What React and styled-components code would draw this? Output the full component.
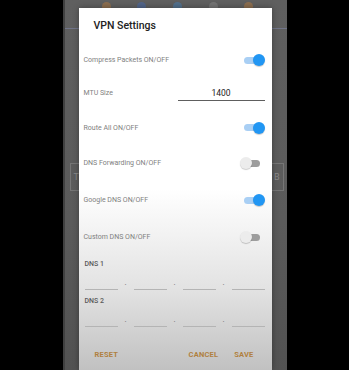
import React from 'react';
import styled, { createGlobalStyle } from 'styled-components';

const Global = createGlobalStyle`
  html, body {
    margin: 0;
    padding: 0;
    background: #000;
  }
  body {
    font-family: Roboto, 'Noto Sans', sans-serif;
  }
`;

const Stage = styled.div`
  width: 349px;
  height: 370px;
  background: #000;
  display: flex;
  justify-content: center;
  overflow: hidden;
`;

const Screen = styled.div`
  position: relative;
  width: 222px;
  height: 370px;
  border-left: 2px solid #404040;
  background: linear-gradient(to bottom, #5f5f5f 0%, #5b5b5b 60%, #525252 100%);
  display: flex;
  flex-direction: column;
`;

const AppIcons = styled.div`
  display: flex;
  justify-content: space-around;
  padding: 2px 20px 0 24px;
  height: 8px;
`;

const AppIcon = styled.span`
  width: 9px;
  height: 9px;
  border-radius: 50%;
  background: ${(p) => p.$color};
  opacity: 0.35;
`;

const AppDivider = styled.div`
  margin-top: 18px;
  height: 1px;
  background: #707488;
`;

const AppBox = styled.div`
  margin: 134px 3px 0 5px;
  height: 26px;
  border: 1px solid #767676;
  display: flex;
  align-items: center;
  justify-content: space-between;
  padding: 0 3px;
  font-size: 9px;
  color: #8a8a8a;
`;

const Dialog = styled.div`
  position: absolute;
  left: 14px;
  top: 8px;
  bottom: 0;
  width: 193px;
  background: linear-gradient(to bottom, #ffffff 0%, #ffffff 50%, #e2e2e2 78%, #c1c1c1 100%);
  box-shadow: 0 0 6px rgba(0, 0, 0, 0.35);
  display: flex;
  flex-direction: column;
`;

const Title = styled.div`
  height: 24px;
  padding: 12px 0 0 15px;
  font-size: 10.5px;
  line-height: 12px;
  font-weight: 500;
  color: #222;
`;

const Body = styled.div`
  padding: 0 7px 0 5px;
  display: flex;
  flex-direction: column;
`;

const Row = styled.div`
  height: ${(p) => p.$h}px;
  display: flex;
  align-items: center;
  justify-content: space-between;
`;

const Label = styled.span`
  font-size: 7px;
  color: #808080;
`;

const SwitchBox = styled.div`
  position: relative;
  width: 25px;
  height: 12px;
`;

const Track = styled.span`
  position: absolute;
  left: 4px;
  top: 2.5px;
  width: 16px;
  height: 7px;
  border-radius: 4px;
  background: ${(p) => (p.$on ? '#a9cff4' : '#9d9d9d')};
`;

const Thumb = styled.span`
  position: absolute;
  top: 0;
  ${(p) => (p.$on ? 'right: 0;' : 'left: 0;')}
  width: 12px;
  height: 12px;
  border-radius: 50%;
  background: ${(p) => (p.$on ? '#2196f3' : '#ececec')};
  box-shadow: 0 1px 1px rgba(0, 0, 0, 0.2);
`;

const Switch = ({ on }) => (
  <SwitchBox>
    <Track $on={on} />
    <Thumb $on={on} />
  </SwitchBox>
);

const TextField = styled.div`
  width: 87px;
  height: 13px;
  margin-top: 1px;
  border-bottom: 1px solid #5e5e5e;
  text-align: center;
  font-size: 8.5px;
  line-height: 13px;
  color: #222;
`;

const DnsLabel = styled.div`
  margin-top: ${(p) => p.$top}px;
  height: 14px;
  line-height: 14px;
  padding-left: 1px;
  font-size: 7px;
  font-weight: 500;
  color: #5a5a5a;
`;

const IpRow = styled.div`
  height: 19px;
  display: flex;
  align-items: flex-end;
  padding-left: 1px;
`;

const IpField = styled.span`
  flex: 0 0 33px;
  height: 18px;
  border-bottom: 1px solid #b4b4b4;
`;

const IpDot = styled.span`
  flex: 0 0 16px;
  text-align: center;
  font-size: 8px;
  line-height: 8px;
  padding-bottom: 3px;
  color: #666;
`;

const Actions = styled.div`
  margin-top: 13px;
  height: 28px;
  display: flex;
  align-items: center;
  padding: 0 18px 0 16px;
  gap: 16px;
`;

const ActionBtn = styled.span`
  font-size: 7.5px;
  font-weight: 700;
  letter-spacing: 0.2px;
  color: #b0803f;
  ${(p) => (p.$push ? 'margin-right: auto;' : '')}
`;

const IpInputs = () => (
  <IpRow>
    <IpField />
    <IpDot>.</IpDot>
    <IpField />
    <IpDot>.</IpDot>
    <IpField />
    <IpDot>.</IpDot>
    <IpField />
  </IpRow>
);

export default function App() {
  return (
    <Stage>
      <Global />
      <Screen>
        <AppIcons>
          <AppIcon $color="#e08a30" />
          <AppIcon $color="#3a6fd8" />
          <AppIcon $color="#3a8fe0" />
          <AppIcon $color="#9a9a9a" />
          <AppIcon $color="#e08a30" />
        </AppIcons>
        <AppDivider />
        <AppBox>
          <span>T</span>
          <span>B</span>
        </AppBox>
        <Dialog>
          <Title>VPN Settings</Title>
          <Body>
            <Row $h={32}>
              <Label>Compress Packets ON/OFF</Label>
              <Switch on />
            </Row>
            <Row $h={34}>
              <Label>MTU Size</Label>
              <TextField>1400</TextField>
            </Row>
            <Row $h={35}>
              <Label>Route All ON/OFF</Label>
              <Switch on />
            </Row>
            <Row $h={36}>
              <Label>DNS Forwarding ON/OFF</Label>
              <Switch />
            </Row>
            <Row $h={38}>
              <Label>Google DNS ON/OFF</Label>
              <Switch on />
            </Row>
            <Row $h={36}>
              <Label>Custom DNS ON/OFF</Label>
              <Switch />
            </Row>
            <DnsLabel $top={2}>DNS 1</DnsLabel>
            <IpInputs />
            <DnsLabel $top={4}>DNS 2</DnsLabel>
            <IpInputs />
          </Body>
          <Actions>
            <ActionBtn $push>RESET</ActionBtn>
            <ActionBtn>CANCEL</ActionBtn>
            <ActionBtn>SAVE</ActionBtn>
          </Actions>
        </Dialog>
      </Screen>
    </Stage>
  );
}
